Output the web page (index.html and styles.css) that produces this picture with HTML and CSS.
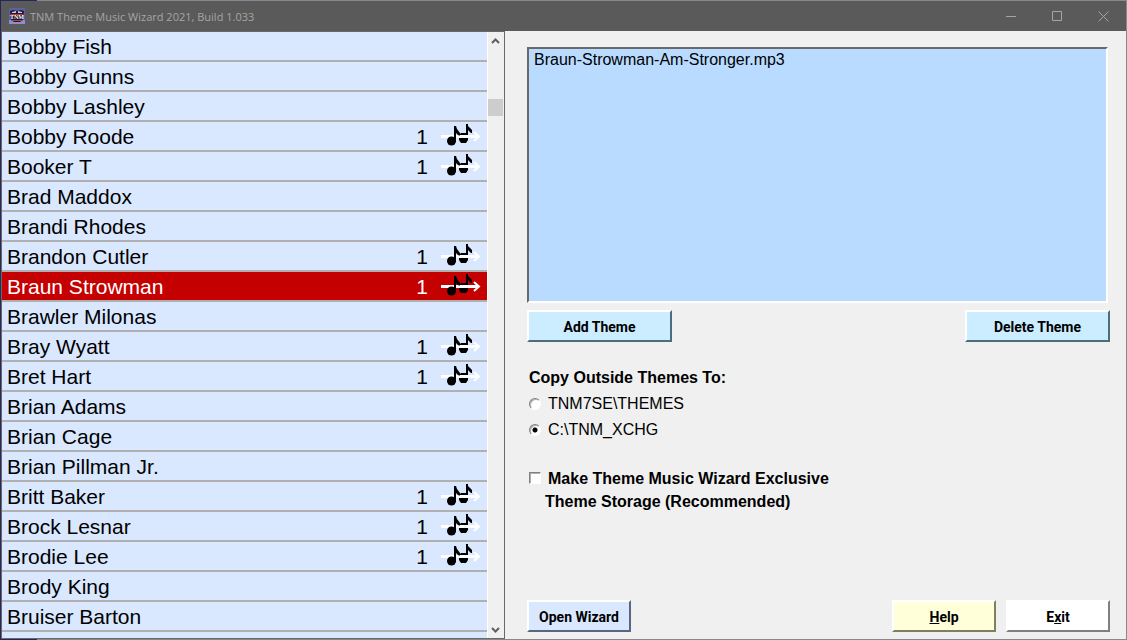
FILE: index.html
```html
<!DOCTYPE html>
<html lang="en">
<head>
<meta charset="UTF-8">
<meta name="viewport" content="width=device-width, initial-scale=1.0">
<title>TNM Theme Music Wizard 2021, Build 1.033</title>
<link rel="stylesheet" href="styles.css">
</head>
<body>
<svg class="symbols" width="0" height="0" aria-hidden="true">
    <symbol id="notes" viewBox="0 0 40 26">
        <path d="M0 12.500h38" stroke="#fff" stroke-width="3"/>
        <path d="M33 8l5 4.500-5 4.500" stroke="#fff" stroke-width="2" fill="none"/>
        <path d="M13 2h2l1 3 3 4v3h-1l-3-3v9h-2zM25 0h2v2l4 4v3h-1l-3-3v5h-2z" fill="#000"/>
        <circle cx="10.500" cy="17" r="4.500" fill="#000"/>
        <path d="M18 11l2-2h6v2zM18 14h9v2l-2 3h-5l-2-3z" fill="#000"/>
        <path class="shaft" d="M15 12.500h20" stroke="#fff" stroke-width="2"/>
    </symbol>
</svg>
<div class="window">
    <header class="title-bar">
        <svg class="logo" width="16" height="16" viewBox="0 0 16 16" aria-hidden="true">
            <rect width="16" height="16" fill="#5860a8"/>
            <rect y="12" width="16" height="4" fill="#8c8ed0"/>
            <path d="M1 3l3-1 4 1 4-1 3 1-1 9-3 2H5l-3-2z" fill="#241a30"/>
            <path d="M3 4l4-1v2H3zM9 3l4 1v1H9z" fill="#d7c3d0"/>
            <path d="M2 6h12v1H2zM3 12h10v1H3z" fill="#b83848"/>
            <text x="8" y="11" text-anchor="middle" class="logo-text">TNM</text>
        </svg>
        <h1>TNM Theme Music Wizard 2021, Build 1.033</h1>
        <div class="window-buttons">
            <button type="button" aria-label="Minimize"><svg width="11" height="11"><path d="M0 5.500h10"/></svg></button>
            <button type="button" aria-label="Maximize"><svg width="11" height="11"><path d="M.5.5h9v9h-9z"/></svg></button>
            <button type="button" aria-label="Close"><svg width="11" height="11"><path d="M.5.5l10 10M10.500.5l-10 10"/></svg></button>
        </div>
    </header>
    <main class="content">
        <section class="roster">
            <ul class="names" id="names"></ul>
            <div class="scrollbar">
                <button type="button" aria-label="Scroll up"><svg width="9" height="6"><path d="M1 5l3.500-3.500L8 5"/></svg></button>
                <div class="track"><div class="thumb"></div></div>
                <button type="button" aria-label="Scroll down"><svg width="9" height="6"><path d="M1 1l3.500 3.500L8 1"/></svg></button>
            </div>
        </section>
        <section class="panel">
            <ul class="themes">
                <li>Braun-Strowman-Am-Stronger.mp3</li>
            </ul>
            <div class="button-row theme-buttons">
                <button type="button" class="btn cyan wide">Add Theme</button>
                <button type="button" class="btn cyan wide">Delete Theme</button>
            </div>
            <fieldset class="copy-to">
                <legend>Copy Outside Themes To:</legend>
                <label class="option"><input type="radio" name="folder">TNM7SE\THEMES</label>
                <label class="option"><input type="radio" name="folder" checked>C:\TNM_XCHG</label>
            </fieldset>
            <div class="exclusive">
                <input type="checkbox" id="exclusive">
                <label for="exclusive">Make Theme Music Wizard Exclusive<br>Theme Storage (Recommended)</label>
            </div>
            <div class="button-row bottom-buttons">
                <button type="button" class="btn blue">Open Wizard</button>
                <button type="button" class="btn yellow push"><u>H</u>elp</button>
                <button type="button" class="btn white">E<u>x</u>it</button>
            </div>
        </section>
    </main>
</div>
<script src="script.js"></script>
</body>
</html>
```

FILE: styles.css
```css
* {
    box-sizing: border-box;
}

body {
    margin: 0;
    height: 100vh;
    padding: 1px;
    background: linear-gradient(to right, #27275c 37px, #858a90 37px);
    font-family: "Liberation Sans", Arial, sans-serif;
    color: #000;
}

ul {
    list-style: none;
    margin: 0;
    padding: 0;
}

.symbols {
    position: absolute;
}

.window {
    height: 100%;
    display: flex;
    flex-direction: column;
    background-color: #f0f0f0;
}

.title-bar {
    height: 30px;
    flex: none;
    display: flex;
    align-items: center;
    padding-left: 8px;
    background-color: #5a5a5a;
    color: #a5a5a5;
}

.title-bar h1 {
    margin: 0 0 0 5px;
    font: 11px "Open Sans", "Noto Sans", sans-serif;
}

.logo-text {
    font: bold 6px "Liberation Serif", serif;
    fill: #fff;
}

.window-buttons {
    display: flex;
    height: 100%;
    margin-left: auto;
}

.window-buttons button {
    width: 46px;
    padding: 0;
    border: none;
    background: none;
    display: flex;
    align-items: center;
    justify-content: center;
}

.window-buttons svg {
    fill: none;
    stroke: #a5a5a5;
}

.content {
    flex: 1;
    min-height: 0;
    display: flex;
}

/* wrestler list */
.roster {
    width: 504px;
    flex: none;
    display: flex;
    border: 1px solid #696969;
}

.names {
    flex: 1;
    overflow: hidden;
}

.names li {
    height: 30px;
    display: flex;
    align-items: center;
    padding: 2px 6px 0 5px;
    border-bottom: 2px solid #b0b0b0;
    background-color: #d9e8ff;
    font-size: 21px;
    line-height: 26px;
}

.names .count {
    margin-left: auto;
    margin-right: 13px;
}

.names .selected {
    background-color: #c40000;
    color: #fff;
}

.scrollbar {
    width: 17px;
    display: flex;
    flex-direction: column;
    border-left: 1px solid #fff;
    background-color: #f0f0f0;
}

.scrollbar button {
    height: 17px;
    padding: 0 1px 0 0;
    border: none;
    background: none;
    display: flex;
    align-items: center;
    justify-content: center;
}

.scrollbar svg {
    fill: none;
    stroke: #606060;
    stroke-width: 2;
}

.track {
    flex: 1;
}

.thumb {
    height: 17px;
    margin: 50px 1px 0 0;
    background-color: #cdcdcd;
}

/* right side */
.panel {
    flex: 1;
    display: flex;
    flex-direction: column;
    padding: 16px 16px 7px 22px;
}

.themes {
    height: 256px;
    padding: 1px 5px;
    border: 2px solid;
    border-color: #696969 #fff #fff #696969;
    background-color: #b9dbff;
    font-size: 16px;
    line-height: 20px;
    margin-right: 2px;
}

.button-row {
    display: flex;
}

.theme-buttons {
    justify-content: space-between;
    margin-top: 7px;
}

.bottom-buttons {
    margin-top: auto;
    gap: 10px;
}

.btn {
    width: 104px;
    height: 32px;
    padding: 2px 0 0;
    border: 2px solid;
    font: bold 14px Roboto, "Liberation Sans", sans-serif;
    color: #000;
}

.wide {
    width: 145px;
}

.push {
    margin-left: auto;
}

.cyan {
    background-color: #ccedff;
    border-color: #fff #4c6c80 #4c6c80 #fff;
}

.blue {
    background-color: #d9e8ff;
    border-color: #fff #586684 #586684 #fff;
}

.yellow {
    background-color: #ffffd9;
    border-color: #fff #80805c #80805c #fff;
}

.white {
    background-color: #fff;
    border-color: #fff #808080 #808080 #fff;
}

.copy-to {
    margin: 26px 0 0 2px;
    padding: 0;
    border: none;
}

.copy-to legend {
    padding: 0;
    font-size: 16px;
    font-weight: bold;
    line-height: 20px;
    margin-bottom: 3px;
}

.option {
    display: flex;
    align-items: center;
    gap: 7px;
    font-size: 16px;
    line-height: 26px;
}

input {
    appearance: none;
    flex: none;
    width: 12px;
    height: 12px;
    margin: 0;
    border: 1px solid;
    border-color: #808080 #fff #fff #808080;
    background-color: #fff;
    box-shadow: inset 1px 1px #b0b0b0;
}

input[type="radio"] {
    border-radius: 50%;
}

input[type="radio"]:checked {
    background-image: radial-gradient(circle, #000 2px, transparent 3px);
}

.exclusive {
    display: flex;
    align-items: flex-start;
    gap: 4px;
    margin: 24px 0 0 2px;
}

.exclusive input {
    margin-top: 5px;
}

.exclusive label {
    text-indent: 3px;
    font-size: 16px;
    font-weight: bold;
    line-height: 23px;
}
```

FILE: script.js
```js
const wrestlers = [
    ['Bobby Fish', 0],
    ['Bobby Gunns', 0],
    ['Bobby Lashley', 0],
    ['Bobby Roode', 1],
    ['Booker T', 1],
    ['Brad Maddox', 0],
    ['Brandi Rhodes', 0],
    ['Brandon Cutler', 1],
    ['Braun Strowman', 1],
    ['Brawler Milonas', 0],
    ['Bray Wyatt', 1],
    ['Bret Hart', 1],
    ['Brian Adams', 0],
    ['Brian Cage', 0],
    ['Brian Pillman Jr.', 0],
    ['Britt Baker', 1],
    ['Brock Lesnar', 1],
    ['Brodie Lee', 1],
    ['Brody King', 0],
    ['Bruiser Barton', 0],
    ['', 0]
];

const list = document.getElementById('names');

wrestlers.forEach(function ([name, themes]) {
    const row = document.createElement('li');
    row.textContent = name;
    if (name === 'Braun Strowman') {
        row.className = 'selected';
    }
    if (themes > 0) {
        row.insertAdjacentHTML('beforeend',
            '<span class="count">' + themes + '</span>' +
            '<svg width="40" height="26"><use href="#notes"/></svg>');
    }
    list.appendChild(row);
});
```
